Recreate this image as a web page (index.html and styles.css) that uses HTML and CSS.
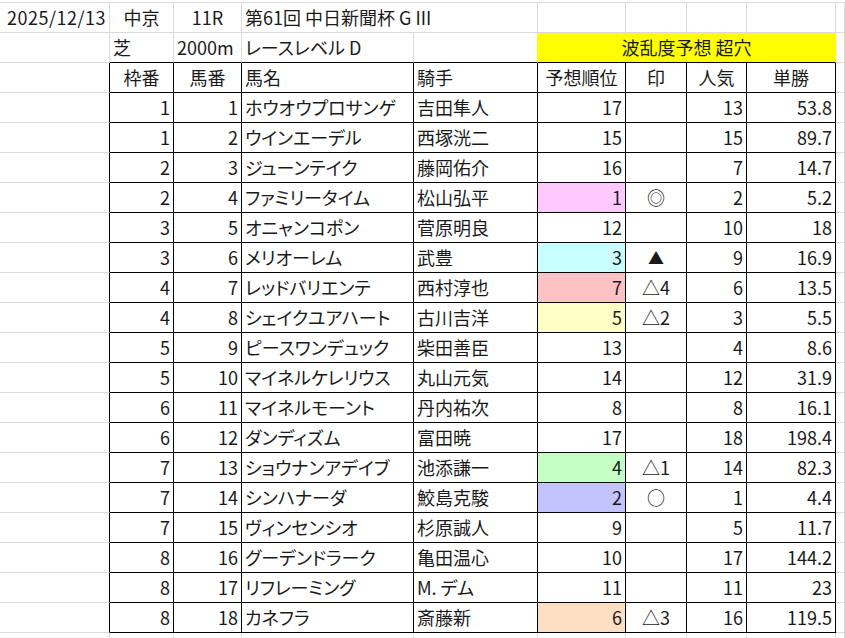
FILE: index.html
```html
<!DOCTYPE html>
<html lang="ja">
<head>
<meta charset="utf-8">
<title>中日新聞杯</title>
<link rel="stylesheet" href="styles.css">
</head>
<body>
<div class="sheet">
  <div class="row top">
    <div class="r date">2025/12/13</div><div class="m">中京</div><div class="m">11R</div><div class="l span2">第61回 中日新聞杯 G III</div><div></div><div></div><div></div><div></div><div></div>
  </div>
  <div class="row sub">
    <div></div><div class="l">芝</div><div class="l">2000m</div><div class="l">レースレベル D</div><div class="pre"></div><div class="m yellow span4">波乱度予想 超穴</div><div></div>
  </div>
  <div class="row t head">
    <div></div><div class="m">枠番</div><div class="m">馬番</div><div class="l">馬名</div><div class="l">騎手</div><div class="m">予想順位</div><div class="m">印</div><div class="m">人気</div><div class="m">単勝</div><div></div>
  </div>
  <div class="row t"><div></div><div class="r">1</div><div class="r">1</div><div class="l kana">ホウオウプロサンゲ</div><div class="l">吉田隼人</div><div class="r">17</div><div class="m"></div><div class="r">13</div><div class="r">53.8</div><div></div></div>
  <div class="row t"><div></div><div class="r">1</div><div class="r">2</div><div class="l kana">ウインエーデル</div><div class="l">西塚洸二</div><div class="r">15</div><div class="m"></div><div class="r">15</div><div class="r">89.7</div><div></div></div>
  <div class="row t"><div></div><div class="r">2</div><div class="r">3</div><div class="l kana">ジューンテイク</div><div class="l">藤岡佑介</div><div class="r">16</div><div class="m"></div><div class="r">7</div><div class="r">14.7</div><div></div></div>
  <div class="row t"><div></div><div class="r">2</div><div class="r">4</div><div class="l kana">ファミリータイム</div><div class="l">松山弘平</div><div class="r pink">1</div><div class="m">◎</div><div class="r">2</div><div class="r">5.2</div><div></div></div>
  <div class="row t"><div></div><div class="r">3</div><div class="r">5</div><div class="l kana">オニャンコポン</div><div class="l">菅原明良</div><div class="r">12</div><div class="m"></div><div class="r">10</div><div class="r">18</div><div></div></div>
  <div class="row t"><div></div><div class="r">3</div><div class="r">6</div><div class="l kana">メリオーレム</div><div class="l">武豊</div><div class="r cyan">3</div><div class="m tri">▲</div><div class="r">9</div><div class="r">16.9</div><div></div></div>
  <div class="row t"><div></div><div class="r">4</div><div class="r">7</div><div class="l kana">レッドバリエンテ</div><div class="l">西村淳也</div><div class="r salmon">7</div><div class="m">△4</div><div class="r">6</div><div class="r">13.5</div><div></div></div>
  <div class="row t"><div></div><div class="r">4</div><div class="r">8</div><div class="l kana">シェイクユアハート</div><div class="l">古川吉洋</div><div class="r lemon">5</div><div class="m">△2</div><div class="r">3</div><div class="r">5.5</div><div></div></div>
  <div class="row t"><div></div><div class="r">5</div><div class="r">9</div><div class="l kana">ピースワンデュック</div><div class="l">柴田善臣</div><div class="r">13</div><div class="m"></div><div class="r">4</div><div class="r">8.6</div><div></div></div>
  <div class="row t"><div></div><div class="r">5</div><div class="r">10</div><div class="l kana">マイネルケレリウス</div><div class="l">丸山元気</div><div class="r">14</div><div class="m"></div><div class="r">12</div><div class="r">31.9</div><div></div></div>
  <div class="row t"><div></div><div class="r">6</div><div class="r">11</div><div class="l kana">マイネルモーント</div><div class="l">丹内祐次</div><div class="r">8</div><div class="m"></div><div class="r">8</div><div class="r">16.1</div><div></div></div>
  <div class="row t"><div></div><div class="r">6</div><div class="r">12</div><div class="l kana">ダンディズム</div><div class="l">富田暁</div><div class="r">17</div><div class="m"></div><div class="r">18</div><div class="r">198.4</div><div></div></div>
  <div class="row t"><div></div><div class="r">7</div><div class="r">13</div><div class="l kana">ショウナンアデイブ</div><div class="l">池添謙一</div><div class="r green">4</div><div class="m">△1</div><div class="r">14</div><div class="r">82.3</div><div></div></div>
  <div class="row t"><div></div><div class="r">7</div><div class="r">14</div><div class="l kana">シンハナーダ</div><div class="l">鮫島克駿</div><div class="r lavender">2</div><div class="m">○</div><div class="r">1</div><div class="r">4.4</div><div></div></div>
  <div class="row t"><div></div><div class="r">7</div><div class="r">15</div><div class="l kana">ヴィンセンシオ</div><div class="l">杉原誠人</div><div class="r">9</div><div class="m"></div><div class="r">5</div><div class="r">11.7</div><div></div></div>
  <div class="row t"><div></div><div class="r">8</div><div class="r">16</div><div class="l kana">グーデンドラーク</div><div class="l">亀田温心</div><div class="r">10</div><div class="m"></div><div class="r">17</div><div class="r">144.2</div><div></div></div>
  <div class="row t"><div></div><div class="r">8</div><div class="r">17</div><div class="l kana">リフレーミング</div><div class="l kana">M. デム</div><div class="r">11</div><div class="m"></div><div class="r">11</div><div class="r">23</div><div></div></div>
  <div class="row t"><div></div><div class="r">8</div><div class="r">18</div><div class="l kana">カネフラ</div><div class="l">斎藤新</div><div class="r peach">6</div><div class="m">△3</div><div class="r">16</div><div class="r">119.5</div><div></div></div>
  <div class="row"><div></div><div></div><div></div><div></div><div></div><div></div><div></div><div></div><div></div><div></div></div>
</div>
</body>
</html>
```

FILE: styles.css
```css
html, body {
  margin: 0;
  padding: 0;
  background: #fff;
}
body {
  padding-top: 2px;
}
.sheet {
  width: 845px;
  border-top: 1px solid #dadada;
  font-family: "Noto Sans CJK JP", sans-serif;
  font-size: 18px;
  color: #1a1a1a;
}
.row {
  display: grid;
  grid-template-columns: 110px 64px 68px 172px 124px 88px 61px 60px 89px 1fr;
  height: 30px;
}
.row > div {
  box-sizing: border-box;
  border-right: 1px solid #dadada;
  border-bottom: 1px solid #dadada;
  display: flex;
  align-items: flex-end;
  padding: 0 3px 5px 3px;
  line-height: 20px;
  white-space: nowrap;
  overflow: visible;
  min-width: 0;
}
.r { justify-content: flex-end; }
.m { justify-content: center; }
.l { justify-content: flex-start; }
.date { letter-spacing: 0.5px; }
.kana { font-feature-settings: "palt" 1; }
.sub > div:nth-child(4) { font-feature-settings: "palt" 1; }
.span2 { grid-column: span 2; }
.span4 { grid-column: span 4; }
.sub > div:nth-child(n+2):nth-child(-n+6) { border-bottom-color: #000; }
.sub > .pre { border-right-color: #ffff00; }
.yellow { background: #ffff00; border-right-color: #ffff00 !important; }
.t > div:nth-child(-n+9) { border-right-color: #000; }
.t > div:nth-child(n+2):nth-child(-n+9) { border-bottom-color: #000; }
.pink { background: #ffc9ff; }
.cyan { background: #c9ffff; }
.salmon { background: #ffc2c2; }
.lemon { background: #ffffc6; }
.green { background: #c4ffc4; }
.lavender { background: #c3c3ff; }
.peach { background: #ffdfc4; }
.tri { font-size: 16px; }
```
